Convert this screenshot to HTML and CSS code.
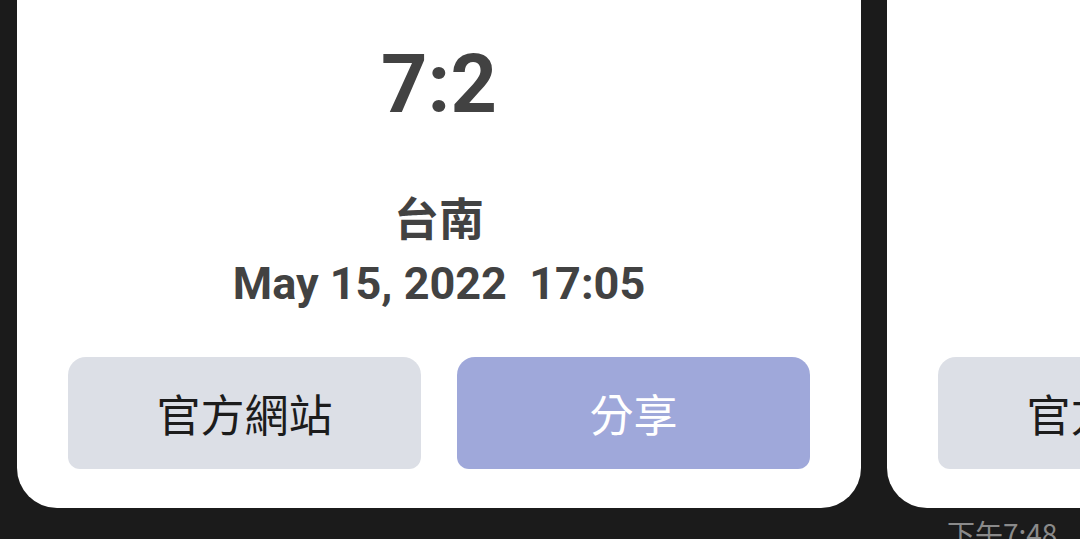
FILE: index.html
```html
<!DOCTYPE html>
<html lang="zh-Hant">
<head>
<meta charset="utf-8">
<link rel="stylesheet" href="styles.css">
</head>
<body>
<div class="feed">
  <div class="column">
    <div class="card">
      <div class="score">7:2</div>
      <div class="place">台南</div>
      <div class="date">May 15, 2022  17:05</div>
      <div class="actions">
        <div class="btn btn-site">官方網站</div>
        <div class="btn btn-share">分享</div>
      </div>
    </div>
  </div>
  <div class="column">
    <div class="card">
      <div class="score">&nbsp;</div>
      <div class="place">&nbsp;</div>
      <div class="date">&nbsp;</div>
      <div class="actions">
        <div class="btn btn-site">官方網站</div>
        <div class="btn btn-share">分享</div>
      </div>
    </div>
    <div class="stamp">下午7:48</div>
  </div>
</div>
</body>
</html>
```
FILE: styles.css
```css
html, body {
  margin: 0;
  padding: 0;
  background: #1b1b1b;
  overflow: hidden;
  width: 1080px;
  height: 539px;
}
body {
  font-family: Roboto, "Noto Sans CJK TC", sans-serif;
}
.feed {
  display: flex;
  gap: 26px;
  margin-top: -40px;
  padding-left: 17px;
}
.column {
  display: flex;
  flex-direction: column;
  flex: 0 0 844px;
}
.card {
  background: #ffffff;
  border-radius: 40px;
  padding: 84px 51px 39px;
  display: flex;
  flex-direction: column;
  align-items: center;
  color: #424242;
}
.score {
  font-size: 81px;
  font-weight: 700;
  line-height: 81px;
  height: 81px;
}
.place {
  margin-top: 62px;
  font-family: "Noto Sans CJK TC", sans-serif;
  font-size: 45px;
  font-weight: 700;
  line-height: 60px;
  height: 60px;
}
.date {
  margin-top: 7px;
  font-size: 45px;
  font-weight: 700;
  line-height: 60px;
  height: 60px;
  white-space: pre;
}
.actions {
  margin-top: 43px;
  display: flex;
  gap: 36px;
  align-self: stretch;
}
.btn {
  flex: 1;
  height: 112px;
  border-radius: 18px 18px 12px 12px;
  display: flex;
  align-items: center;
  justify-content: center;
  font-family: "Noto Sans CJK TC", sans-serif;
  font-size: 44px;
  font-weight: 400;
}
.btn-site {
  background: #dcdfe6;
  color: #1c1c1c;
}
.btn-share {
  background: #9fa8da;
  color: #ffffff;
}
.stamp {
  margin-top: 5px;
  margin-left: 60px;
  font-family: "Noto Sans CJK TC", sans-serif;
  font-size: 28px;
  color: #8a8a8a;
  line-height: 40px;
}
```
